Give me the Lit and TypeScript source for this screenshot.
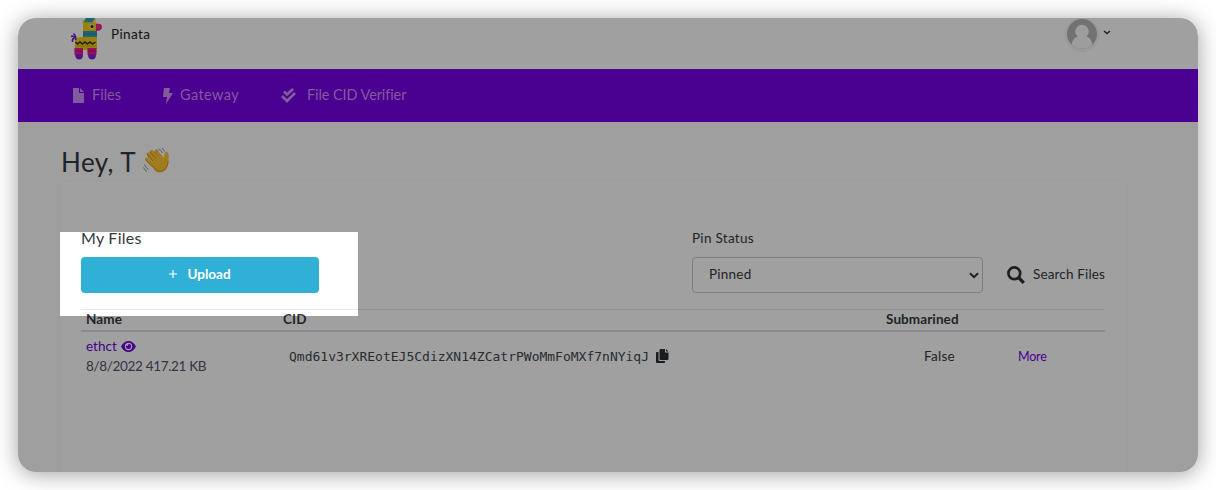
import { LitElement, html, css, svg } from "lit";
import { customElement } from "lit/decorators.js";

@customElement("pinata-logo")
class PinataLogo extends LitElement {
  static styles = css`
    :host { display: block; }
    svg { display: block; }
  `;
  render() {
    return html`<svg width="34" height="42" viewBox="0 0 34 42">
      <path d="M16 0h9l-3 5h-9z" fill="#2f9fc0"/>
      <path d="M12 4l3-3-1 5zM23 4l3-4-1 5z" fill="#f6d31c"/>
      <path d="M13 5q6-2 14 0v8q-6 2-14 1z" fill="#f2cf17"/>
      <path d="M26 6q6-1 6 3t-6 4z" fill="#ee278c"/>
      <rect x="19.500" y="6.500" width="4.500" height="4" fill="#f5efb0"/>
      <circle cx="22" cy="8.500" r="1.500" fill="#20202a"/>
      <path d="M13 13h14v8H13z" fill="#359dbb"/>
      <path d="M13 16h14" stroke="#2b88a8"/>
      <path d="M5 20q10-2 22-1v12q-10 2-22 0z" fill="#f2cf17"/>
      <path d="M5.500 24l2 2 2.500-2 2.500 2 2.500-2 2.500 2 2.500-2 2.500 2 3-2" fill="none" stroke="#302e27" stroke-width="1.500"/>
      <path d="M5 28h22" stroke="#dca819"/>
      <path d="M4.500 30H13v7H4.500zM17.500 30h9v7h-9z" fill="#eb1d88"/>
      <path d="M4.500 33H13M17.500 33h9" stroke="#c90f72"/>
      <path d="M5 36.500h8q0 5-3.800 5T5 36.500zM18 36.500h8q0 5-3.900 5t-4.100-5z" fill="#7a22df"/>
      <path d="M5.500 22q1-4-2-6.500M5 19.500q-2-2-4-1M4.500 20q-2.500.5-2 4" fill="none" stroke="#7521d6" stroke-width="1.600"/>
    </svg>`;
  }
}

const wave = svg`
  <g fill="none" stroke-linecap="round">
    <path d="M9 16.500L4 11.500M12 13.500L5.500 6.500M15 11L8.500 4M18 9.500L13 4" stroke="#dd9c19" stroke-width="3.600"/>
    <path d="M9.500 16L4.300 10.800M12.500 13L5.900 5.900M15.500 10.500L9 3.600M18.300 9L13.500 3.700" stroke="#fdc935" stroke-width="2.600"/>
  </g>
  <path d="M7.500 15.500l10.500-9 2.700 3.500q.6-1 .7-4.200 1-2.800 3-1.700 1.900 1 1.100 8.400-.1 6.500-3.500 9.500-4.500 4-9.200 1.500z" fill="#fdc62f"/>
  <path d="M8.500 17l5 5.500q5 2.500 9-1.500 2.700-3.500 2.500-8" fill="none" stroke="#e3a01b" stroke-width="1.200"/>
  <path d="M15 3.500Q14 1.500 13.500 1.500M15.500 1q2.500 1 4 4M18.500 0q2.500 1 3 3.500M1.500 16.500q1 3 4 5M.5 19.500q1 2.500 3.500 4" fill="none" stroke="#909090" stroke-width="1"/>`;

@customElement("app-root")
class AppRoot extends LitElement {
  static styles = css`
    :host { display: block; height: 490px; box-sizing: border-box; padding: 18px; background: #fff; overflow: hidden;
      font-family: Lato, "Open Sans", sans-serif; color: #343a40; font-size: 13.500px; line-height: 20px; }
    * { box-sizing: border-box; }
    svg { display: block; flex: none; }
    .shell { height: 454px; border-radius: 18px; box-shadow: 0 2px 22px rgba(0,0,0,.38); }
    .window { position: relative; height: 454px; border-radius: 18px; overflow: hidden; background: #fefefe; }
    .spotlight { position: absolute; left: 42px; top: 214px; width: 298px; height: 84px; box-shadow: 0 0 0 1300px rgba(0,0,0,.373); pointer-events: none; }
    .header { height: 51px; background: #fff; display: flex; align-items: flex-start; padding-left: 52px; }
    .brand { margin: 6px 0 0 7px; letter-spacing: .4px; color: #212529; }
    .account { display: flex; margin: -1px 87px 0 auto; }
    .avatar { width: 36px; height: 36px; }
    .chev { margin: 13px 0 0 3px; }
    .nav { height: 53px; background: #7700e6; color: #cf91fa; display: flex; align-items: center; padding-left: 54px; font-size: 14.500px; }
    .link { display: flex; align-items: center; }
    .link span { position: relative; top: -.5px; }
    .files { width: 90px; gap: 7px; }
    .gateway { width: 119px; gap: 7px; letter-spacing: .4px; }
    .verify { gap: 11px; letter-spacing: -.1px; }
    .hello { display: flex; height: 60px; padding: 22px 0 0 43px; font-size: 26px; line-height: 36px; letter-spacing: .45px; }
    .hello svg { margin: 4px 0 0 7px; }
    .card { margin-left: 43px; width: 1065px; height: 300px; background: #fff; padding: 47px 21px 0 20px; box-shadow: 0 0 9px rgba(0,0,0,.035); }
    .tools { display: flex; height: 80px; }
    .mine { width: 611px; }
    .title { height: 28px; font-size: 16px; letter-spacing: .25px; line-height: 18px; }
    .label { height: 28px; letter-spacing: .3px; line-height: 18px; }
    .upload { width: 238px; height: 36px; border-radius: 4px; background: #30afd7; color: #fff; display: flex; align-items: center; justify-content: center; gap: 10px; font-weight: 700; padding-bottom: 2px; }
    .select { width: 291px; height: 36px; border: 1px solid #c8c9d4; border-radius: 4px; display: flex; align-items: center; justify-content: space-between; padding: 0 3px 0 16px; letter-spacing: .25px; }
    .select span, .search span { padding-bottom: 2px; }
    .search { display: flex; align-items: center; height: 36px; margin: 28px 0 0 24px; gap: 8px; white-space: nowrap; letter-spacing: .15px; }
    .cols { display: grid; grid-template-columns: 197px 603px 132px 92px; }
    .head { height: 23px; border-top: 1px solid #e7e7eb; border-bottom: 2px solid #dedde8; font-weight: 700; line-height: 18px; letter-spacing: .1px; }
    .head > * { padding-left: 5px; }
    .row { padding-top: 4px; }
    .file { padding-left: 5px; }
    .name { display: flex; align-items: center; gap: 4px; color: #7000dc; font-size: 13.500px; }
    .meta { color: #555568; white-space: nowrap; letter-spacing: -.33px; }
    .cid { padding: 11px 0 0 11px; display: flex; gap: 7px; }
    .hash { font: 13px/20px "DejaVu Sans Mono", monospace; color: #42474f; }
    .cid svg { margin-top: 2px; }
    .false { padding: 10px 0 0 43px; letter-spacing: .3px; }
    .more { padding: 11px 0 0 5px; color: #7900e8; font-size: 12.500px; letter-spacing: -.2px; }
  `;
  render() {
    return html`
    <div class="shell"><div class="window">
      <div class="header">
        <pinata-logo></pinata-logo><span class="brand">Pinata</span>
        <div class="account">
          <svg class="avatar" viewBox="0 0 36 36"><circle cx="18" cy="18" r="17.500" fill="#f6f6f6"/><circle cx="18" cy="17" r="15" fill="#b6b6b6"/><circle cx="18" cy="14.500" r="6.700" fill="#fafafa"/><path d="M7.500 27.500q2-8 7-8h7q5 0 7 8a15 15 0 0 1-21 0z" fill="#fafafa"/></svg>
          <svg class="chev" width="8" height="5" viewBox="0 0 8 5"><path d="M1 1l3 2.500L7 1" fill="none" stroke="#33333d" stroke-width="1.400"/></svg>
        </div>
      </div>
      <div class="nav">
        <div class="link files"><svg width="13" height="15" viewBox="0 0 13 15"><path d="M1 0h6v5h5v10H1zM8 0l4 4H8z" fill="currentColor"/></svg><span>Files</span></div>
        <div class="link gateway"><svg width="11" height="16" viewBox="0 0 11 16"><path d="M2 0h6L7 5h4L4 16l1-7H1z" fill="currentColor"/></svg><span>Gateway</span></div>
        <div class="link verify"><svg width="15" height="15" viewBox="0 0 15 15"><path d="M3 3.500l3 3L12 1M1 8l5 5 8-8" fill="none" stroke="currentColor" stroke-width="2.700"/></svg><span>File CID Verifier</span></div>
      </div>
      <div class="hello"><span>Hey, T</span><svg width="27" height="26" viewBox="0 0 27 26">${wave}</svg></div>
      <div class="card">
        <div class="tools">
          <div class="mine"><div class="title">My Files</div>
            <div class="upload"><svg width="8" height="8" viewBox="0 0 8 8"><path d="M4 0v8M0 4h8" stroke="#fff" stroke-width="1.200"/></svg><span>Upload</span></div></div>
          <div><div class="label">Pin Status</div>
            <div class="select"><span>Pinned</span><svg width="10" height="7" viewBox="0 0 10 7"><path d="M1 1.200l4 4 4-4" fill="none" stroke="#30343b" stroke-width="2"/></svg></div></div>
          <div class="search"><svg width="18" height="18" viewBox="0 0 18 18"><circle cx="7.300" cy="7.300" r="5.900" fill="none" stroke="#2e333a" stroke-width="2.700"/><path d="M11.500 11.500l5.300 5.300" stroke="#2e333a" stroke-width="3.200"/></svg><span>Search Files</span></div>
        </div>
        <div class="cols head"><span>Name</span><span>CID</span><span>Submarined</span><span></span></div>
        <div class="cols row">
          <div class="file"><div class="name"><span>ethct</span><svg width="15" height="11" viewBox="0 0 15 11"><path d="M0 5.500Q3 0 7.500 0T15 5.500Q12 11 7.500 11T0 5.500z" fill="currentColor"/><circle cx="7.500" cy="5.500" r="3.700" fill="#fff"/><path d="M7.500 3a2.500 2.500 0 1 1-2.300 1.600q1.300.8 2-.3z" fill="currentColor"/></svg></div><div class="meta">8/8/2022 417.21 KB</div></div>
          <div class="cid"><span class="hash">Qmd61v3rXREotEJ5CdizXN14ZCatrPWoMmFoMXf7nNYiqJ</span><svg width="13" height="14" viewBox="0 0 13 14"><path d="M4.500 0H9v3.500h3.500V10q0 1-1 1h-7q-1 0-1-1V1q0-1 1-1zM10 0l2.500 2.500H10zM0 3.500Q0 3 1 3h1.500v8q0 1 1 1H9v1q0 1-1 1H1q-1 0-1-1z" fill="#292e35"/></svg></div>
          <div class="false">False</div><div class="more">More</div>
        </div>
      </div>
      <div class="spotlight"></div>
    </div></div>`;
  }
}
